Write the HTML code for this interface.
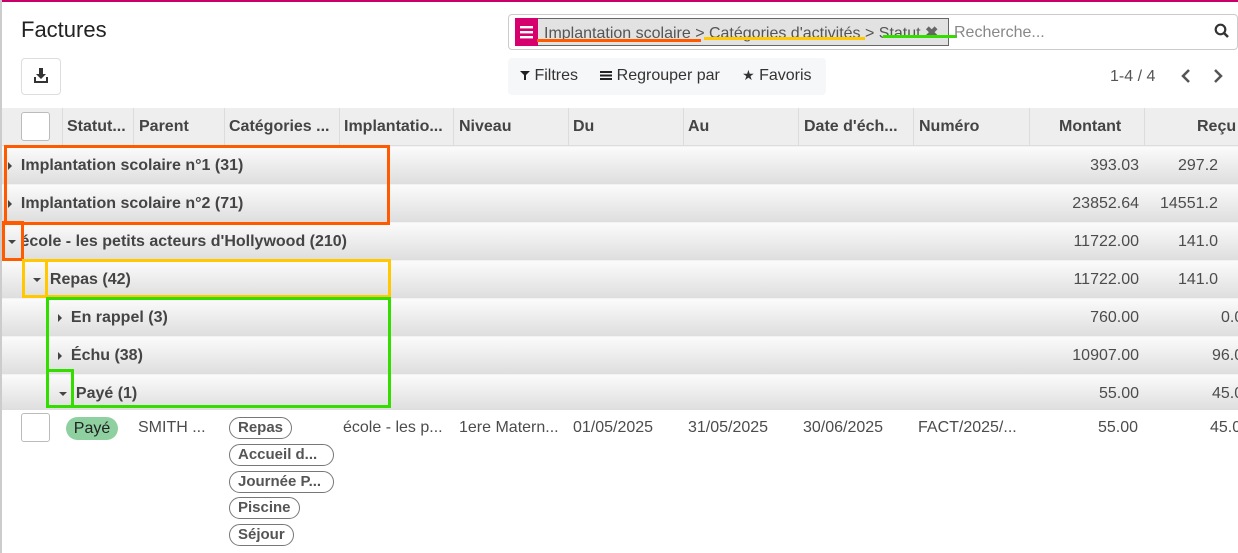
<!DOCTYPE html>
<html><head><meta charset="utf-8"><style>
*{box-sizing:border-box;margin:0;padding:0}
body{width:1238px;height:553px;overflow:hidden;background:#fff;font-family:"Liberation Sans",Arial,sans-serif;color:#4c4c4c;position:relative;font-size:16px}
.a{position:absolute}
.topbar{left:0;top:0;width:1238px;height:2px;background:#c8006a}
.lb{left:0;top:0;width:2px;height:553px;background:#ccc}
.th{top:108px;height:38px;font-weight:bold;color:#444;line-height:38px;font-size:16px;white-space:nowrap}
.sep{top:108px;width:1px;height:38px;background:#dcdcdc}
.g{left:2px;width:1236px;height:38px;background:linear-gradient(#fbfbfb,#dedede);border-top:1px solid #f2f2f2;font-weight:bold;color:#444;line-height:38px;white-space:nowrap;font-size:16px}
.num{position:absolute;font-weight:normal;color:#4c4c4c}
.tri{display:inline-block;width:0;height:0;vertical-align:middle}
.r{border-top:4px solid transparent;border-bottom:4px solid transparent;border-left:4px solid #444}
.d{border-left:4px solid transparent;border-right:4px solid transparent;border-top:4px solid #444}
.box{position:absolute;border:3px solid}
.tag{position:absolute;left:229px;height:22px;border:1px solid #777;border-radius:11px;padding:0 8px;font-weight:bold;font-size:15px;line-height:20px;color:#555;white-space:nowrap}
.cell{position:absolute;top:419px;font-size:16px;white-space:nowrap}
</style></head><body>
<div class="a topbar"></div>
<div class="a lb"></div>
<div class="a" style="left:21px;top:17px;font-size:22px;color:#222">Factures</div>
<div class="a" style="left:21px;top:58px;width:40px;height:37px;border:1px solid #ddd;border-radius:4px">
<svg width="40" height="37" viewBox="0 0 40 37"><path d="M17 9h4v6h3l-5 5-5-5h3z" fill="#333"/><path d="M12 18v6h14v-6h-2v4H14v-4z" fill="#333"/></svg></div>
<!-- search -->
<div class="a" style="left:508px;top:14px;width:730px;height:36px;border:1px solid #ccc;border-radius:4px"></div>
<div class="a" style="left:515px;top:18px;width:434px;height:28px;background:#e2e2e2;border:1px solid #666"></div>
<div class="a" style="left:515px;top:18px;width:23px;height:28px;background:#d5006d"><svg width="23" height="28"><rect x="5" y="8" width="13" height="2.4" fill="#fff"/><rect x="5" y="13" width="13" height="2.4" fill="#fff"/><rect x="5" y="18" width="13" height="2.4" fill="#fff"/></svg></div>
<div class="a" style="left:544px;top:23px;font-size:16px;color:#555;white-space:nowrap">Implantation scolaire &gt; Catégories d'activités &gt; Statut <b style="color:#666">✖</b></div>
<div class="a" style="left:537px;top:39px;width:164px;height:3px;background:#ff5a00"></div>
<div class="a" style="left:704px;top:37px;width:161px;height:3px;background:#ffc800"></div>
<div class="a" style="left:883px;top:35px;width:74px;height:3px;background:#33dd00"></div>
<div class="a" style="left:954px;top:24px;font-size:16px;color:#888">Recherche...</div>
<svg class="a" style="left:1214px;top:23px" width="16" height="16"><circle cx="6.5" cy="6.5" r="4.8" stroke="#333" stroke-width="2.2" fill="none"/><path d="M10 10l4 4" stroke="#333" stroke-width="2.5"/></svg>
<div class="a" style="left:508px;top:58px;width:318px;height:37px;background:#f6f7f9;border-radius:4px"></div>
<div class="a" style="left:520px;top:67px;font-size:16px;color:#333;white-space:nowrap">
<svg width="10" height="10"><path d="M0 1h10L6 5v5H4V5z" fill="#222"/></svg> Filtres &nbsp;&nbsp;&nbsp;
<svg width="12" height="10"><rect y="1" width="12" height="2" fill="#222"/><rect y="4.5" width="12" height="2" fill="#222"/><rect y="8" width="12" height="2" fill="#222"/></svg> Regrouper par &nbsp;&nbsp;&nbsp;
<span style="font-size:14px">★</span> Favoris</div>
<div class="a" style="left:1110px;top:68px;font-size:16px;color:#555">1-4 / 4</div>
<svg class="a" style="left:1180px;top:69px" width="50" height="14"><path d="M9 1L3 7l6 6" stroke="#555" stroke-width="2.5" fill="none"/><path d="M35 1l6 6-6 6" stroke="#555" stroke-width="2.5" fill="none"/></svg>
<!-- header -->
<div class="a" style="left:2px;top:108px;width:1236px;height:38px;background:#eee;border-bottom:1px solid #ddd"></div>
<div class="a" style="left:21px;top:112px;width:29px;height:29px;background:#fff;border:1px solid #bbb;border-radius:3px"></div>
<div class="a th" style="left:67px">Statut...</div>
<div class="a th" style="left:139px">Parent</div>
<div class="a th" style="left:229px">Catégories ...</div>
<div class="a th" style="left:344px">Implantatio...</div>
<div class="a th" style="left:459px">Niveau</div>
<div class="a th" style="left:573px">Du</div>
<div class="a th" style="left:688px">Au</div>
<div class="a th" style="left:804px">Date d'éch...</div>
<div class="a th" style="left:919px">Numéro</div>
<div class="a th" style="left:1059px">Montant</div>
<div class="a th" style="left:1197px">Reçu</div>
<div class="a sep" style="left:62px"></div><div class="a sep" style="left:133px"></div><div class="a sep" style="left:224px"></div><div class="a sep" style="left:339px"></div><div class="a sep" style="left:453px"></div><div class="a sep" style="left:568px"></div><div class="a sep" style="left:683px"></div><div class="a sep" style="left:798px"></div><div class="a sep" style="left:913px"></div><div class="a sep" style="left:1029px"></div><div class="a sep" style="left:1144px"></div>
<!-- groups -->
<div class="a g" style="top:146px"><span style="padding-left:6px"><i class="tri r"></i>&nbsp; Implantation scolaire n°1 (31)</span><span class="num" style="right:99px">393.03</span><span class="num" style="left:1176px">297.2</span></div>
<div class="a g" style="top:184px"><span style="padding-left:6px"><i class="tri r"></i>&nbsp; Implantation scolaire n°2 (71)</span><span class="num" style="right:99px">23852.64</span><span class="num" style="left:1158px">14551.2</span></div>
<div class="a g" style="top:222px"><span style="padding-left:6px"><i class="tri d"></i> école - les petits acteurs d'Hollywood (210)</span><span class="num" style="right:99px">11722.00</span><span class="num" style="left:1176px">141.0</span></div>
<div class="a g" style="top:260px"><span style="padding-left:31px"><i class="tri d"></i> &nbsp;Repas (42)</span><span class="num" style="right:99px">11722.00</span><span class="num" style="left:1176px">141.0</span></div>
<div class="a g" style="top:298px"><span style="padding-left:56px"><i class="tri r"></i> &nbsp;En rappel (3)</span><span class="num" style="right:99px">760.00</span><span class="num" style="left:1219px">0.0</span></div>
<div class="a g" style="top:336px"><span style="padding-left:56px"><i class="tri r"></i> &nbsp;Échu (38)</span><span class="num" style="right:99px">10907.00</span><span class="num" style="left:1210px">96.0</span></div>
<div class="a g" style="top:374px;height:36px"><span style="padding-left:57px"><i class="tri d"></i> &nbsp;Payé (1)</span><span class="num" style="right:99px">55.00</span><span class="num" style="left:1210px">45.0</span></div>
<!-- boxes -->
<div class="box" style="left:4px;top:145px;width:386px;height:80px;border-color:#ff5a00"></div>
<div class="box" style="left:2px;top:221px;width:22px;height:40px;border-color:#ff5a00"></div>
<div class="box" style="left:22px;top:259px;width:369px;height:39px;border-color:#ffc800"></div>
<div class="box" style="left:22px;top:259px;width:26px;height:39px;border-color:#ffc800"></div>
<div class="box" style="left:46px;top:297px;width:345px;height:111px;border-color:#33dd00"></div>
<div class="box" style="left:46px;top:369px;width:28px;height:39px;border-color:#33dd00"></div>
<!-- record -->
<div class="a" style="left:21px;top:413px;width:29px;height:29px;border:1px solid #bbb;border-radius:3px"></div>
<div class="a" style="left:66px;top:417px;width:52px;height:23px;background:#8fd0a0;border-radius:12px;text-align:center;line-height:23px;color:#222;font-size:16px">Payé</div>
<div class="cell" style="left:138px">SMITH ...</div>
<div class="tag" style="top:417px">Repas</div>
<div class="tag" style="top:444px;width:105px">Accueil d...</div>
<div class="tag" style="top:471px;width:105px">Journée P...</div>
<div class="tag" style="top:497px">Piscine</div>
<div class="tag" style="top:524px">Séjour</div>
<div class="cell" style="left:343px">école - les p...</div>
<div class="cell" style="left:459px">1ere Matern...</div>
<div class="cell" style="left:573px">01/05/2025</div>
<div class="cell" style="left:688px">31/05/2025</div>
<div class="cell" style="left:803px">30/06/2025</div>
<div class="cell" style="left:918px">FACT/2025/...</div>
<div class="cell" style="left:1098px">55.00</div>
<div class="cell" style="left:1210px">45.0</div>
</body></html>
